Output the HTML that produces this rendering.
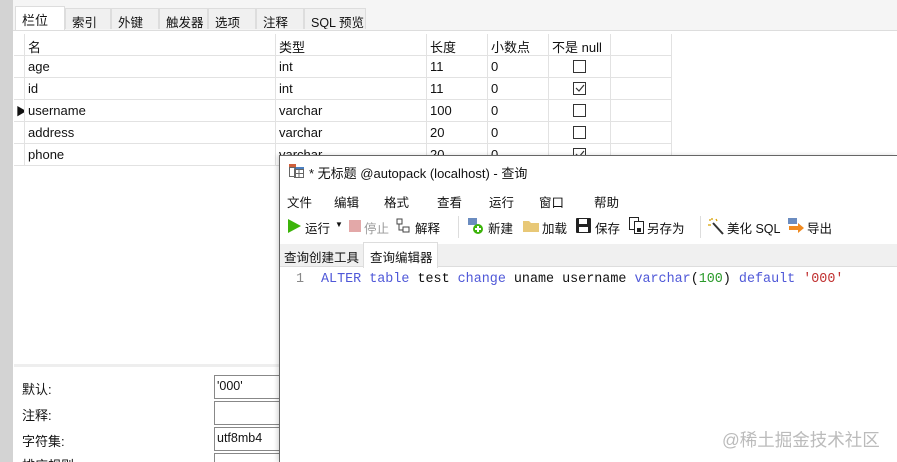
<!DOCTYPE html>
<html><head><meta charset="utf-8"><style>
*{margin:0;padding:0;box-sizing:border-box}
html,body{width:897px;height:462px;overflow:hidden}
body{background:#fff;position:relative;font-family:"Liberation Sans","Noto Sans CJK SC",sans-serif;font-size:13px;color:#111}
.a{position:absolute}
.tab{position:absolute;top:8px;height:21px;background:#f0f0f0;border:1px solid #ddd;border-bottom:none;padding:3px 0 0 6px;font-size:12.5px;white-space:nowrap;overflow:hidden}
.cell{position:absolute;height:22px;border-right:1px solid #e2e2e2;border-bottom:1px solid #e2e2e2;padding:3px 0 0 3px;font-size:13px;white-space:nowrap;overflow:hidden}
.cb{position:absolute;width:13px;height:13px;border:1px solid #333;background:#fff}
.menu span{position:absolute;top:0}
.mono{font-family:"Liberation Mono","Noto Sans CJK SC",monospace;font-size:13.4px}
</style></head><body>
<div class="a" style="left:0;top:0;width:13px;height:462px;background:#d3d3d3"></div>
<div class="a" style="left:13px;top:0;width:884px;height:30px;background:#f5f5f5"></div>
<div class="tab" style="left:15px;top:6px;height:25px;width:50px;background:#fff;font-size:13px">栏位</div>
<div class="tab" style="left:65px;width:46px">索引</div>
<div class="tab" style="left:111px;width:48px">外键</div>
<div class="tab" style="left:159px;width:49px">触发器</div>
<div class="tab" style="left:208px;width:48px">选项</div>
<div class="tab" style="left:256px;width:48px">注释</div>
<div class="tab" style="left:304px;width:62px">SQL 预览</div>
<div class="a" style="left:13px;top:30px;width:884px;height:1px;background:#ddd"></div>
<div class="a" style="left:14px;top:33px;width:658px;height:134px;background:#fff"></div>
<div id="tbl"></div>
<div class="a" style="left:14px;top:364px;width:266px;height:3px;background:#eee"></div>
<div class="a" style="left:22px;top:379px;font-size:13px">默认:</div>
<div class="a" style="left:22px;top:405px;font-size:13px">注释:</div>
<div class="a" style="left:22px;top:431px;font-size:13px">字符集:</div>
<div class="a" style="left:22px;top:455px;font-size:13px">排序规则:</div>
<div class="a" style="left:214px;top:375px;width:70px;height:24px;border:1px solid #888;padding:3px 2px;font-size:12.5px">'000'</div>
<div class="a" style="left:214px;top:401px;width:70px;height:24px;border:1px solid #888"></div>
<div class="a" style="left:214px;top:427px;width:70px;height:24px;border:1px solid #888;padding:3px 2px;font-size:12.5px">utf8mb4</div>
<div class="a" style="left:214px;top:453px;width:70px;height:24px;border:1px solid #888"></div>

<div class="a" style="left:279px;top:155px;width:618px;height:307px;background:#fff;border-left:1px solid #666;border-top:1px solid #666;box-shadow:-2px 0 4px rgba(0,0,0,.15)">
  <svg class="a" style="left:9px;top:8px" width="16" height="14"><rect x="0" y="0" width="7" height="3" fill="#d0603c"/><rect x="5" y="3" width="10" height="3" fill="#4a7fc0"/><rect x="0.5" y="3.5" width="6" height="9" fill="none" stroke="#666"/><rect x="5.5" y="5.5" width="9" height="8" fill="none" stroke="#666"/><line x1="5" y1="9.5" x2="15" y2="9.5" stroke="#666"/><line x1="10" y1="6" x2="10" y2="14" stroke="#666"/></svg>
  <div class="a" style="left:29px;top:7px;font-size:13px">* 无标题 @autopack (localhost) - 查询</div>
  <div class="a menu" style="left:7px;top:36px;font-size:12.5px;width:600px">
    <span style="left:0">文件</span><span style="left:47px">编辑</span><span style="left:97px">格式</span><span style="left:150px">查看</span><span style="left:202px">运行</span><span style="left:252px">窗口</span><span style="left:307px">帮助</span>
  </div>
  <div class="a" style="left:0;top:58px;width:617px;height:26px;font-size:12.5px">
    <svg class="a" style="left:8px;top:5px" width="13" height="14"><path d="M0 0L13 7L0 14Z" fill="#3cb40a"/></svg>
    <span class="a" style="left:25px;top:4px">运行</span><span class="a" style="left:55px;top:6px;font-size:8px">▼</span>
    <div class="a" style="left:69px;top:6px;width:12px;height:12px;background:#e3a8a8"></div>
    <span class="a" style="left:84px;top:4px;color:#999">停止</span>
    <svg class="a" style="left:116px;top:4px" width="16" height="16"><rect x="1" y="1" width="5" height="5" fill="none" stroke="#444"/><rect x="7" y="9" width="6" height="5" fill="none" stroke="#444"/><path d="M3 6V12H7" fill="none" stroke="#444"/></svg>
    <span class="a" style="left:135px;top:4px">解释</span>
    <div class="a" style="left:178px;top:2px;width:1px;height:22px;background:#ddd"></div>
    <svg class="a" style="left:187px;top:3px" width="18" height="18"><rect x="1" y="1" width="9" height="7" fill="#6b8cc0"/><circle cx="11" cy="12" r="5" fill="#3cb40a"/><path d="M8 12H14M11 9V15" stroke="#fff" stroke-width="2"/></svg>
    <span class="a" style="left:208px;top:4px">新建</span>
    <svg class="a" style="left:243px;top:5px" width="17" height="14"><path d="M0 2H6L8 4H16V13H0Z" fill="#e8c877"/></svg>
    <span class="a" style="left:262px;top:4px">加载</span>
    <svg class="a" style="left:296px;top:4px" width="15" height="15"><rect x="0" y="0" width="15" height="15" rx="1" fill="#222"/><rect x="3" y="1" width="8" height="5" fill="#fff"/><rect x="3" y="9" width="9" height="5" fill="#fff"/></svg>
    <span class="a" style="left:315px;top:4px">保存</span>
    <svg class="a" style="left:349px;top:3px" width="15" height="17"><rect x="0.5" y="0.5" width="9" height="12" fill="#fff" stroke="#222"/><rect x="5.5" y="4.5" width="9" height="12" fill="#fff" stroke="#222"/><rect x="8" y="11" width="4" height="4" fill="#222"/></svg>
    <span class="a" style="left:367px;top:4px">另存为</span>
    <div class="a" style="left:420px;top:2px;width:1px;height:22px;background:#ddd"></div>
    <svg class="a" style="left:427px;top:3px" width="18" height="18"><path d="M6 6L16 17" stroke="#333" stroke-width="2"/><path d="M2 3L4 3M5 1V3M9 2L10 4M1 8H4" stroke="#d8a000" stroke-width="1.3"/></svg>
    <span class="a" style="left:447px;top:4px">美化 SQL</span>
    <svg class="a" style="left:507px;top:3px" width="18" height="18"><rect x="1" y="1" width="9" height="6" fill="#6b8cc0"/><path d="M2 9H11V6L17 11L11 16V13H2Z" fill="#f08a20"/></svg>
    <span class="a" style="left:527px;top:4px">导出</span>
  </div>
  <div class="a" style="left:0;top:88px;width:617px;height:23px;background:#f0f0f0;border-bottom:1px solid #ddd"></div>
  <div class="a" style="left:4px;top:91px;font-size:12.5px">查询创建工具</div>
  <div class="a" style="left:83px;top:86px;width:75px;height:26px;background:#fff;border:1px solid #ddd;border-bottom:none;padding:4px 0 0 6px;font-size:12.5px">查询编辑器</div>
  <div class="a mono" style="left:16px;top:116px;color:#888">1</div>
  <div class="a mono" style="left:41px;top:116px;white-space:pre"><span style="color:#4f58d8">ALTER</span> <span style="color:#4f58d8">table</span> test <span style="color:#4f58d8">change</span> uname username <span style="color:#4f58d8">varchar</span>(<span style="color:#2a9a2a">100</span>) <span style="color:#4f58d8">default</span> <span style="color:#c03030">'000'</span></div>
  <div class="a" style="left:442px;top:271px;font-size:17.5px;color:#bbb">@稀土掘金技术社区</div>
</div>
<script>
var cols=[[14,11],[25,251],[276,151],[427,61],[488,61],[549,62],[611,61]];
var rows=[["名","类型","长度","小数点","不是 null"],["age","int","11","0",0],["id","int","11","0",1],["username","varchar","100","0",0],["address","varchar","20","0",0],["phone","varchar","20","0",1]];
var h="";
rows.forEach(function(r,i){var y=34+i*22;
 h+='<div class="cell" style="left:14px;top:'+y+'px;width:11px;">'+(i==3?'<span style="font-size:11px;margin-left:-1px">▶</span>':'')+'</div>';
 for(var c=0;c<4;c++)h+='<div class="cell" style="left:'+cols[c+1][0]+'px;top:'+y+'px;width:'+cols[c+1][1]+'px">'+r[c]+'</div>';
 if(i==0)h+='<div class="cell" style="left:549px;top:'+y+'px;width:62px">'+r[4]+'</div>';
 else h+='<div class="cell" style="left:549px;top:'+y+'px;width:62px"></div><div class="cb" style="left:573px;top:'+(y+4)+'px">'+(r[4]?'<svg width="11" height="11" style="position:absolute;left:0;top:0"><path d="M2 5L5 8L10 2" fill="none" stroke="#333" stroke-width="1.2"/></svg>':'')+'</div>';
 h+='<div class="cell" style="left:611px;top:'+y+'px;width:61px"></div>';
});
document.getElementById("tbl").innerHTML=h;
</script>
</body></html>
